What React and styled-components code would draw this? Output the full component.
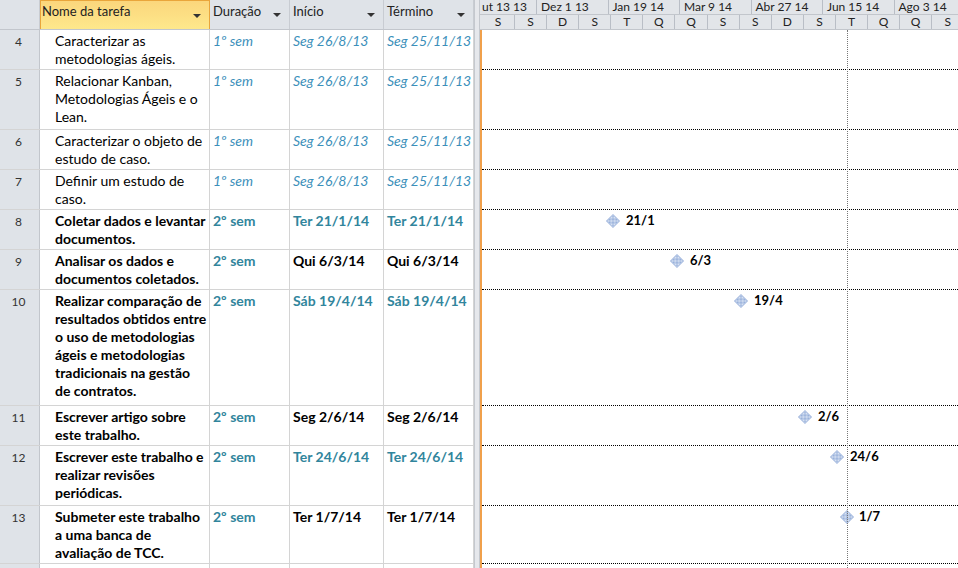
import styled, { createGlobalStyle, css } from "styled-components";

const GlobalStyle = createGlobalStyle`
  html, body { margin: 0; padding: 0; background: #fff; }
  body { font-family: Lato, "Open Sans", sans-serif; color: #000; }
`;

const rows = [
  { id: 4, h: 40, name: ["Caracterizar as", "metodologias ágeis."], dur: "1º sem", start: "Seg 26/8/13", end: "Seg 25/11/13", tone: "sub" },
  { id: 5, h: 60, name: ["Relacionar Kanban,", "Metodologias Ágeis e o", "Lean."], dur: "1º sem", start: "Seg 26/8/13", end: "Seg 25/11/13", tone: "sub" },
  { id: 6, h: 40, name: ["Caracterizar o objeto de", "estudo de caso."], dur: "1º sem", start: "Seg 26/8/13", end: "Seg 25/11/13", tone: "sub" },
  { id: 7, h: 40, name: ["Definir um estudo de", "caso."], dur: "1º sem", start: "Seg 26/8/13", end: "Seg 25/11/13", tone: "sub" },
  { id: 8, h: 40, name: ["Coletar dados e levantar", "documentos."], dur: "2º sem", start: "Ter 21/1/14", end: "Ter 21/1/14", tone: "teal", ms: { x: 130, label: "21/1" } },
  { id: 9, h: 40, name: ["Analisar os dados e", "documentos coletados."], dur: "2º sem", start: "Qui 6/3/14", end: "Qui 6/3/14", tone: "bold", ms: { x: 194, label: "6/3" } },
  { id: 10, h: 116, name: ["Realizar comparação de", "resultados obtidos entre", "o uso de metodologias", "ágeis e metodologias", "tradicionais na gestão", "de contratos."], dur: "2º sem", start: "Sáb 19/4/14", end: "Sáb 19/4/14", tone: "teal", ms: { x: 258, label: "19/4" } },
  { id: 11, h: 40, name: ["Escrever artigo sobre", "este trabalho."], dur: "2º sem", start: "Seg 2/6/14", end: "Seg 2/6/14", tone: "bold", ms: { x: 322, label: "2/6" } },
  { id: 12, h: 60, name: ["Escrever este trabalho e", "realizar revisões", "periódicas."], dur: "2º sem", start: "Ter 24/6/14", end: "Ter 24/6/14", tone: "teal", ms: { x: 354, label: "24/6" } },
  { id: 13, h: 58, name: ["Submeter este trabalho", "a uma banca de", "avaliação de TCC."], dur: "2º sem", start: "Ter 1/7/14", end: "Ter 1/7/14", tone: "bold", ms: { x: 364, label: "1/7", gap: 13 } },
];

// first period is clipped by the view edge
const majors = ["ut 13 13", "Dez 1 13", "Jan 19 14", "Mar 9 14", "Abr 27 14", "Jun 15 14", "Ago 3 14"];
const minors = ["S", "S", "D", "S", "T", "Q", "Q", "S", "S", "D", "S", "T", "Q", "Q", "S"];

const COLS = "40px 170px 80px 94px 90px";
const GRAY = "#dfe3e8";
const LINE = "#d4d4d4";

const Page = styled.div`
  display: flex;
  width: 958px;
  height: 568px;
  overflow: hidden;
`;

const Sheet = styled.div`
  width: 474px;
  flex: none;
  display: flex;
  flex-direction: column;
`;

const HeadRow = styled.div`
  display: grid;
  grid-template-columns: ${COLS};
  height: 30px;
  flex: none;
  box-sizing: border-box;
  border-bottom: 1px solid #c2c6cc;
  background: ${GRAY};
`;

const HeadCell = styled.div`
  position: relative;
  box-sizing: border-box;
  padding: 3px 0 0 3px;
  font-size: 13px;
  color: #222;
  border-right: 1px solid #c8ccd2;
  ${(p) =>
    p.$active &&
    css`
      background: linear-gradient(#fbd67c, #fee88c);
      border: 1px solid #e9a53b;
      border-bottom: none;
      padding: 2px 0 0 1px;
    `}
`;

const Caret = styled.span`
  position: absolute;
  right: 8px;
  top: 13px;
  width: 0;
  height: 0;
  border-left: 4px solid transparent;
  border-right: 4px solid transparent;
  border-top: 4px solid #333;
`;

const Row = styled.div`
  display: grid;
  grid-template-columns: ${COLS};
  height: ${(p) => p.$h}px;
  flex: none;
  box-sizing: border-box;
  border-bottom: 1px solid ${LINE};
`;

const IdCell = styled.div`
  background: ${GRAY};
  border-right: 1px solid #c2c6cc;
  text-align: center;
  font-size: 12px;
  color: #333;
  padding-top: 4px;
  padding-right: 2px;
`;

const toneStyles = {
  plain: css`color: #000;`,
  sub: css`color: #3b8fba; font-style: italic;`,
  teal: css`color: #31859c; font-weight: 700;`,
  bold: css`color: #000; font-weight: 700;`,
};

const Cell = styled.div`
  box-sizing: border-box;
  border-right: 1px solid ${LINE};
  padding: 2px 0 0 ${(p) => p.$indent || 3}px;
  font-size: 14px;
  line-height: 18px;
  white-space: nowrap;
  overflow: hidden;
  ${(p) => toneStyles[p.$tone || "plain"]}
`;

const Line = styled.span`
  display: block;
`;

const Splitter = styled.div`
  width: 4px;
  flex: none;
  background: #e6e8ec;
  border-left: 1px solid #c4c8ce;
  border-right: 1px solid #c4c8ce;
`;

const Chart = styled.div`
  flex: 1;
  display: flex;
  flex-direction: column;
  position: relative;
  min-width: 0;
`;

const Tier = styled.div`
  display: flex;
  height: 15px;
  flex: none;
  box-sizing: border-box;
  padding-left: 2px;
  background: #e2e5e9;
  border-bottom: 1px solid #c2c6cc;
  overflow: hidden;
  font-size: 12px;
  line-height: 14px;
  color: #222;
  white-space: nowrap;
`;

const Major = styled.div`
  flex: none;
  width: 71.5px;
  box-sizing: border-box;
  padding-left: 4px;
  border-right: 1px solid #b9bec6;
  &:first-child { width: 55px; padding-left: 0; }
`;

const Minor = styled.div`
  flex: none;
  width: 32.1px;
  box-sizing: border-box;
  text-align: center;
  border-right: 1px solid #b9bec6;
  &:first-child { width: 33px; }
`;

const Body = styled.div`
  flex: 1;
  display: flex;
  flex-direction: column;
  position: relative;
  border-left: 2px solid #f0a04b;
`;

const Track = styled.div`
  position: relative;
  height: ${(p) => p.$h}px;
  flex: none;
  box-sizing: border-box;
  border-bottom: 1px dotted #000;
`;

const Diamond = styled.span`
  position: absolute;
  top: 6px;
  width: 8px;
  height: 8px;
  margin-left: -4px;
  transform: rotate(45deg);
  background: repeating-conic-gradient(#8aa6d6 0 25%, #e3eaf6 0 50%) 0 0 / 2px 2px;
  border: 0.5px solid #9fb5dd;
`;

const MsLabel = styled.span`
  position: absolute;
  top: 2px;
  font-size: 13px;
  font-weight: 700;
  line-height: 17px;
`;

const StatusLine = styled.div`
  position: absolute;
  top: 0;
  bottom: 0;
  left: 365px;
  border-left: 1px dotted #777;
`;

export default function App() {
  return (
    <>
      <GlobalStyle />
      <Page>
        <Sheet>
          <HeadRow>
            <HeadCell />
            <HeadCell $active>
              Nome da tarefa
              <Caret />
            </HeadCell>
            <HeadCell>
              Duração
              <Caret />
            </HeadCell>
            <HeadCell>
              Início
              <Caret />
            </HeadCell>
            <HeadCell>
              Término
              <Caret />
            </HeadCell>
          </HeadRow>
          {rows.map((r) => (
            <Row key={r.id} $h={r.h}>
              <IdCell>{r.id}</IdCell>
              <Cell $indent={15} $tone={r.tone === "sub" ? "plain" : "bold"}>
                {r.name.map((l) => (
                  <Line key={l}>{l}</Line>
                ))}
              </Cell>
              <Cell $tone={r.tone === "sub" ? "sub" : "teal"}>{r.dur}</Cell>
              <Cell $tone={r.tone}>{r.start}</Cell>
              <Cell $tone={r.tone}>{r.end}</Cell>
            </Row>
          ))}
          <Row $h={20}>
            <IdCell />
            <Cell />
            <Cell />
            <Cell />
            <Cell />
          </Row>
        </Sheet>
        <Splitter />
        <Chart>
          <Tier>
            {majors.map((m) => (
              <Major key={m}>{m}</Major>
            ))}
          </Tier>
          <Tier>
            {minors.map((m, i) => (
              <Minor key={i}>{m}</Minor>
            ))}
          </Tier>
          <Body>
            {rows.map((r) => (
              <Track key={r.id} $h={r.h}>
                {r.ms && (
                  <>
                    <Diamond style={{ left: r.ms.x }} />
                    <MsLabel style={{ left: r.ms.x + (r.ms.gap || 14) }}>{r.ms.label}</MsLabel>
                  </>
                )}
              </Track>
            ))}
            <StatusLine />
          </Body>
        </Chart>
      </Page>
    </>
  );
}
